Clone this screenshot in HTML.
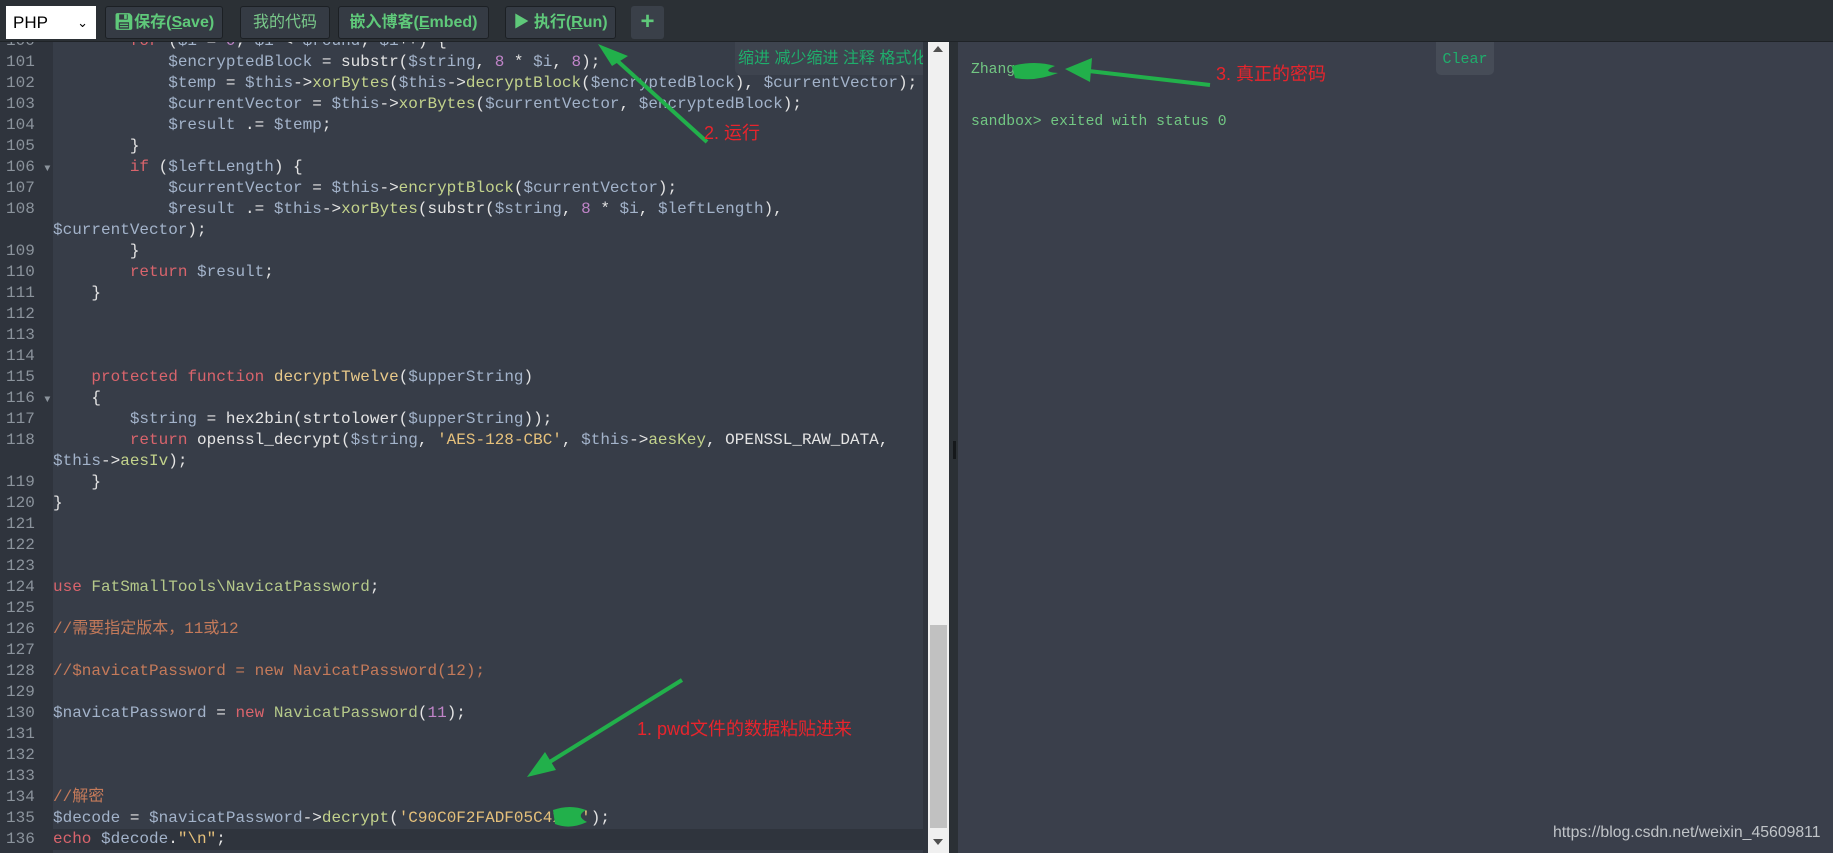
<!DOCTYPE html>
<html><head><meta charset="utf-8"><style>
*{margin:0;padding:0;box-sizing:border-box}
body{width:1833px;height:853px;overflow:hidden;background:#2b3035;font-family:"Liberation Sans","Noto Sans CJK SC",sans-serif;position:relative}
.tb{position:absolute;left:0;top:0;width:1833px;height:42px;background:#2b3035;border-bottom:1px solid #1f2327}
.btn{position:absolute;top:6px;height:33px;background:#353b44;border:1px solid #1c2024;border-radius:3px;color:#5fc97a;font-weight:bold;font-size:16px;line-height:31px;text-align:center}
.sel{position:absolute;left:6px;top:6px;width:90px;height:33px;background:#fff;color:#000;font-size:17px;line-height:33px;padding-left:7px}
.ed{position:absolute;left:0;top:42px;width:923px;height:811px;background:#373d48;overflow:hidden}
.gut{position:absolute;left:0;top:0;width:53px;height:811px;background:#2f343d}
.row{position:absolute;left:0;height:21px;line-height:21px;font-family:"Liberation Mono","Noto Sans CJK SC",monospace;font-size:16px;white-space:pre;color:#e4e4e4}
.ln{position:absolute;left:6px;width:45px;color:#8b939c}
.cd{position:absolute;left:53px}
.v{color:#a3b3ca}.k{color:#d9646c}.f{color:#c3d38c}.s{color:#e5c07b}.n{color:#c084c8}.c{color:#c47a5a}.g{color:#b5c98a}
.ann{position:absolute;color:#e8242c;font-size:18px;font-family:"Liberation Sans","Noto Sans CJK SC",sans-serif}
</style></head><body>
<div class="tb"></div>
<div class="sel">PHP<span style="position:absolute;right:8px;top:0;font-size:13px">&#8964;</span></div>
<div class="btn" style="left:105px;width:118px">&#128190;&#xFE0E;保存(<u>S</u>ave)</div>
<div class="btn" style="left:240px;width:90px;font-weight:normal;color:#79c98a">我的代码</div>
<div class="btn" style="left:338px;width:151px">嵌入博客(<u>E</u>mbed)</div>
<div class="btn" style="left:505px;width:111px">▶ 执行(<u>R</u>un)</div>
<div class="btn" style="left:631px;width:33px;background:#3a4049;border:none;font-size:24px">+</div>

<div class="ed">
<div class="gut"></div>
<div style="position:absolute;left:53px;top:787px;width:870px;height:21px;background:#2f343d"></div>
<div style="position:absolute;top:-11px;left:0;width:923px">
<div class="row" style="top:0"><span class="ln">100</span><span class="cd">        <span class="k">for</span> (<span class="v">$i</span> = <span class="n">0</span>; <span class="v">$i</span> &lt; <span class="v">$round</span>; <span class="v">$i</span>++) {</span></div>
<div class="row" style="top:21px"><span class="ln">101</span><span class="cd">            <span class="v">$encryptedBlock</span> = substr(<span class="v">$string</span>, <span class="n">8</span> * <span class="v">$i</span>, <span class="n">8</span>);</span></div>
<div class="row" style="top:42px"><span class="ln">102</span><span class="cd">            <span class="v">$temp</span> = <span class="v">$this</span>-&gt;<span class="f">xorBytes</span>(<span class="v">$this</span>-&gt;<span class="f">decryptBlock</span>(<span class="v">$encryptedBlock</span>), <span class="v">$currentVector</span>);</span></div>
<div class="row" style="top:63px"><span class="ln">103</span><span class="cd">            <span class="v">$currentVector</span> = <span class="v">$this</span>-&gt;<span class="f">xorBytes</span>(<span class="v">$currentVector</span>, <span class="v">$encryptedBlock</span>);</span></div>
<div class="row" style="top:84px"><span class="ln">104</span><span class="cd">            <span class="v">$result</span> .= <span class="v">$temp</span>;</span></div>
<div class="row" style="top:105px"><span class="ln">105</span><span class="cd">        }</span></div>
<div class="row" style="top:126px"><span class="ln">106 <span style="font-size:10px">▼</span></span><span class="cd">        <span class="k">if</span> (<span class="v">$leftLength</span>) {</span></div>
<div class="row" style="top:147px"><span class="ln">107</span><span class="cd">            <span class="v">$currentVector</span> = <span class="v">$this</span>-&gt;<span class="f">encryptBlock</span>(<span class="v">$currentVector</span>);</span></div>
<div class="row" style="top:168px"><span class="ln">108</span><span class="cd">            <span class="v">$result</span> .= <span class="v">$this</span>-&gt;<span class="f">xorBytes</span>(substr(<span class="v">$string</span>, <span class="n">8</span> * <span class="v">$i</span>, <span class="v">$leftLength</span>),</span></div>
<div class="row" style="top:189px"><span class="cd"><span class="v">$currentVector</span>);</span></div>
<div class="row" style="top:210px"><span class="ln">109</span><span class="cd">        }</span></div>
<div class="row" style="top:231px"><span class="ln">110</span><span class="cd">        <span class="k">return</span> <span class="v">$result</span>;</span></div>
<div class="row" style="top:252px"><span class="ln">111</span><span class="cd">    }</span></div>
<div class="row" style="top:273px"><span class="ln">112</span></div>
<div class="row" style="top:294px"><span class="ln">113</span></div>
<div class="row" style="top:315px"><span class="ln">114</span></div>
<div class="row" style="top:336px"><span class="ln">115</span><span class="cd">    <span class="k">protected</span> <span class="k">function</span> <span class="s" style="color:#e8c98a">decryptTwelve</span>(<span class="v">$upperString</span>)</span></div>
<div class="row" style="top:357px"><span class="ln">116 <span style="font-size:10px">▼</span></span><span class="cd">    {</span></div>
<div class="row" style="top:378px"><span class="ln">117</span><span class="cd">        <span class="v">$string</span> = hex2bin(strtolower(<span class="v">$upperString</span>));</span></div>
<div class="row" style="top:399px"><span class="ln">118</span><span class="cd">        <span class="k">return</span> openssl_decrypt(<span class="v">$string</span>, <span class="s">'AES-128-CBC'</span>, <span class="v">$this</span>-&gt;<span class="f">aesKey</span>, OPENSSL_RAW_DATA,</span></div>
<div class="row" style="top:420px"><span class="cd"><span class="v">$this</span>-&gt;<span class="f">aesIv</span>);</span></div>
<div class="row" style="top:441px"><span class="ln">119</span><span class="cd">    }</span></div>
<div class="row" style="top:462px"><span class="ln">120</span><span class="cd">}</span></div>
<div class="row" style="top:483px"><span class="ln">121</span></div>
<div class="row" style="top:504px"><span class="ln">122</span></div>
<div class="row" style="top:525px"><span class="ln">123</span></div>
<div class="row" style="top:546px"><span class="ln">124</span><span class="cd"><span class="k">use</span> <span class="g">FatSmallTools\NavicatPassword</span>;</span></div>
<div class="row" style="top:567px"><span class="ln">125</span></div>
<div class="row" style="top:588px"><span class="ln">126</span><span class="cd c">//需要指定版本，11或12</span></div>
<div class="row" style="top:609px"><span class="ln">127</span></div>
<div class="row" style="top:630px"><span class="ln">128</span><span class="cd c">//$navicatPassword = new NavicatPassword(12);</span></div>
<div class="row" style="top:651px"><span class="ln">129</span></div>
<div class="row" style="top:672px"><span class="ln">130</span><span class="cd"><span class="v">$navicatPassword</span> = <span class="k">new</span> <span class="g">NavicatPassword</span>(<span class="n">11</span>);</span></div>
<div class="row" style="top:693px"><span class="ln">131</span></div>
<div class="row" style="top:714px"><span class="ln">132</span></div>
<div class="row" style="top:735px"><span class="ln">133</span></div>
<div class="row" style="top:756px"><span class="ln">134</span><span class="cd c">//解密</span></div>
<div class="row" style="top:777px"><span class="ln">135</span><span class="cd"><span class="v">$decode</span> = <span class="v">$navicatPassword</span>-&gt;<span class="f">decrypt</span>(<span class="s">'C90C0F2FADF05C4xxx'</span>);</span></div>
<div class="row" style="top:798px"><span class="ln">136</span><span class="cd"><span class="k">echo</span> <span class="v">$decode</span>.<span class="s">"\n"</span>;</span></div>
</div>
<div style="position:absolute;left:735px;top:0;width:188px;height:33px;background:#3e444f;border-radius:0 0 0 6px;color:#1fae6c;font-size:16px;line-height:33px;padding-left:3px;white-space:nowrap;overflow:hidden">缩进 减少缩进 注释 格式化</div>
</div>
<div style="position:absolute;left:923px;top:42px;width:5px;height:811px;background:#2f343d"></div>
<div style="position:absolute;left:928px;top:42px;width:21px;height:811px;background:#f0f0f0"></div>
<div style="position:absolute;left:933px;top:46px;width:0;height:0;border-left:5px solid transparent;border-right:5px solid transparent;border-bottom:6px solid #505050"></div>
<div style="position:absolute;left:930px;top:625px;width:17px;height:203px;background:#c1c1c1"></div>
<div style="position:absolute;left:933px;top:839px;width:0;height:0;border-left:5px solid transparent;border-right:5px solid transparent;border-top:6px solid #505050"></div>
<div style="position:absolute;left:949px;top:42px;width:9px;height:811px;background:#2b3035"></div>
<div style="position:absolute;left:953px;top:441px;width:3px;height:18px;background:#15181b"></div>

<div style="position:absolute;left:958px;top:42px;width:875px;height:811px;background:#3a3f4b"></div>
<div style="position:absolute;left:1436px;top:42px;width:58px;height:33px;background:#464c57;border-radius:0 0 5px 5px;color:#1fae6c;font-family:'Liberation Mono',monospace;font-size:15px;line-height:35px;text-align:center">Clear</div>
<div style="position:absolute;left:971px;top:62px;color:#72c783;font-family:'Liberation Mono',monospace;font-size:14.7px">Zhang</div>
<div style="position:absolute;left:971px;top:114px;color:#72c783;font-family:'Liberation Mono',monospace;font-size:14.7px">sandbox&gt; exited with status 0</div>
<div style="position:absolute;left:1553px;top:824px;color:#c0c4c8;font-size:15.8px">https://blog.csdn.net/weixin_45609811</div>

<svg width="1833" height="853" style="position:absolute;left:0;top:0">
<g fill="#22b04b" stroke="#22b04b">
<line x1="707" y1="142" x2="612" y2="56" stroke-width="4"/>
<polygon points="598,44 628,56 612,66" stroke="none"/>
<line x1="1210" y1="85" x2="1080" y2="70" stroke-width="4"/>
<polygon points="1065,69 1092,58 1090,82" stroke="none"/>
<line x1="682" y1="680" x2="540" y2="768" stroke-width="4"/>
<polygon points="527,777 545,752 556,770" stroke="none"/>
<path d="M1012 66 Q1035 60 1055 66 Q1040 72 1058 73 Q1035 82 1015 78 Z" stroke="none"/>
<path d="M553 810 Q570 804 586 810 Q575 816 587 822 Q570 830 555 824 Z" stroke="none"/>
</g>
</svg>
<div class="ann" style="left:704px;top:119px">2. 运行</div>
<div class="ann" style="left:1216px;top:60px">3. 真正的密码</div>
<div class="ann" style="left:637px;top:715px">1. pwd文件的数据粘贴进来</div>
</body></html>
